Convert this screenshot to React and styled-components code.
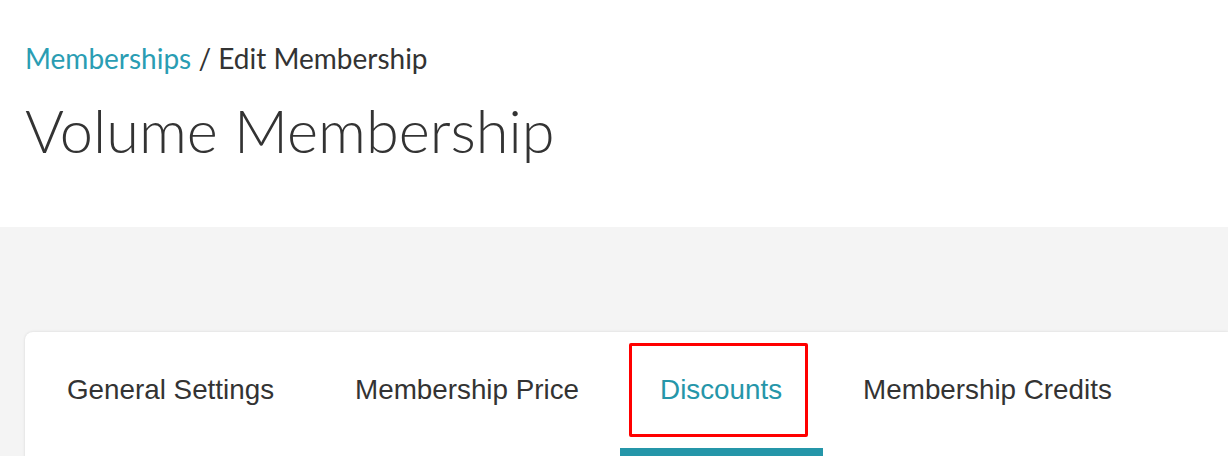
import React, { useState } from "react";
import styled, { createGlobalStyle } from "styled-components";

const GlobalStyle = createGlobalStyle`
  html, body {
    margin: 0;
    padding: 0;
    background: #f4f4f4;
  }
  body {
    font-family: "Liberation Sans", Arial, sans-serif;
    color: #333;
  }
`;

const PageHeader = styled.header`
  background: #fff;
  height: 227px;
  padding: 39px 25px 0;
  box-sizing: border-box;
`;

const Breadcrumb = styled.div`
  font-family: Lato, "Open Sans", sans-serif;
  font-size: 28px;
  line-height: 38px;
  color: #333;
`;

const CrumbLink = styled.a`
  color: #2a9db3;
  text-decoration: none;
`;

const Title = styled.h1`
  margin: 17px 0 0;
  font-family: Lato, "Open Sans", sans-serif;
  font-weight: 300;
  font-size: 59.5px;
  line-height: 72px;
  color: #333;
`;

const Body = styled.main`
  padding: 105px 0 0 25px;
`;

const Card = styled.section`
  background: #fff;
  border-radius: 8px 0 0 0;
  box-shadow: 0 0 3px rgba(0, 0, 0, 0.12);
  min-height: 200px;
`;

const Tabs = styled.nav`
  display: flex;
  height: 124px;
  padding-left: 1.5px;
`;

const Tab = styled.button`
  position: relative;
  display: flex;
  align-items: center;
  padding: 0 40.5px;
  border: none;
  border-bottom: 8px solid ${(p) => (p.$active ? "#2596a9" : "transparent")};
  background: none;
  font-family: "Liberation Sans", Arial, sans-serif;
  font-size: 27.8px;
  color: ${(p) => (p.$active ? "#2596a9" : "#333")};
  cursor: pointer;
  white-space: nowrap;
`;

const Highlight = styled.span`
  position: absolute;
  left: 9px;
  top: 11px;
  width: 179px;
  height: 94px;
  box-sizing: border-box;
  border: 3px solid #ff0000;
  border-radius: 2px;
  pointer-events: none;
`;

const tabs = ["General Settings", "Membership Price", "Discounts", "Membership Credits"];

function App() {
  const [active, setActive] = useState("Discounts");

  return (
    <>
      <GlobalStyle />
      <PageHeader>
        <Breadcrumb>
          <CrumbLink href="#">Memberships</CrumbLink> / Edit Membership
        </Breadcrumb>
        <Title>Volume Membership</Title>
      </PageHeader>
      <Body>
        <Card>
          <Tabs>
            {tabs.map((t) => (
              <Tab key={t} $active={active === t} onClick={() => setActive(t)}>
                {t}
                {t === "Discounts" && <Highlight />}
              </Tab>
            ))}
          </Tabs>
        </Card>
      </Body>
    </>
  );
}

export default App;
